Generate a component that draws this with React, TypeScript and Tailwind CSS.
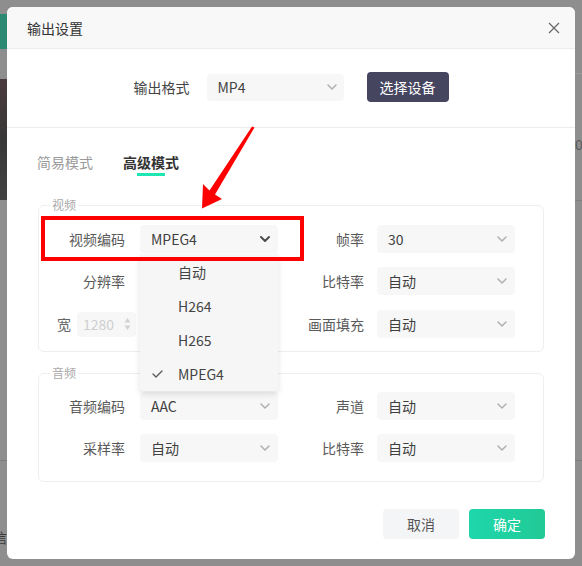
import clsx from 'clsx';

const Chevron = ({ dark }: { dark?: boolean }) => (
    <svg width="10" height="6" viewBox="0 0 10 6" fill="none" className={dark ? 'text-[#4a4a4a]' : 'text-[#b0b0b0]'}>
        <path
            d="M1 1l4 4 4-4"
            stroke="currentColor"
            strokeWidth={dark ? 1.9 : 1.5}
            strokeLinecap="round"
            strokeLinejoin="round"
        />
    </svg>
);

const Select = ({ value, open }: { value: string; open?: boolean }) => (
    <div className="flex h-[28px] w-[138px] items-center justify-between rounded-[4px] bg-[#f7f7f7] pl-[11px] pr-[8px] text-[14px] leading-[20px] text-[#3f3f3f]">
        <span>{value}</span>
        <Chevron dark={open} />
    </div>
);

const Label = ({ text, right }: { text: string; right?: boolean }) => (
    <span
        className={clsx(
            'text-right text-[14px] leading-[20px] text-[#5a5a5a]',
            right ? 'w-[85px]' : 'w-[86px]'
        )}
    >
        {text}
    </span>
);

const Field = ({ label, value, right, open }: { label: string; value: string; right?: boolean; open?: boolean }) => (
    <div className="flex w-[240px] items-center">
        <Label text={label} right={right} />
        <div className={right ? 'ml-[13px]' : 'ml-[15px]'}>
            <Select value={value} open={open} />
        </div>
    </div>
);

const CodecMenu = () => (
    <div className="absolute left-0 top-[29px] z-10 w-[138px] rounded-b-[4px] bg-[#f6f6f6] pt-[1px] shadow-[0_3px_6px_rgba(0,0,0,0.12)]">
        {['自动', 'H264', 'H265', 'MPEG4'].map(item => (
            <div key={item} className="relative flex h-[34px] items-center pl-[38px] text-[14px] leading-[20px] text-[#444]">
                {item === 'MPEG4' && (
                    <svg className="absolute left-[12px] top-[13px]" width="11" height="8" viewBox="0 0 11 8" fill="none">
                        <path d="M1 4l3 3 6-6" stroke="#555" strokeWidth="1.3" strokeLinecap="round" strokeLinejoin="round" />
                    </svg>
                )}
                {item}
            </div>
        ))}
    </div>
);

const App = () => {
    return (
        <div className="relative flex h-[566px] w-[582px] overflow-hidden bg-[#8e8e8e] font-['Noto_Sans_CJK_SC',sans-serif]">
            {/* app behind the overlay, left edge */}
            <div className="flex w-[7px] shrink-0 flex-col overflow-hidden">
                <div className="h-[14px]" />
                <div className="h-[35px] bg-[#2c8a73]" />
                <div className="h-[30px]" />
                <div className="h-[121px] bg-linear-to-b from-[#4a3b3d] via-[#383838] to-[#424242]" />
                <div className="h-[260px]" />
                <div className="h-px bg-[#7d7d7d]" />
                <div className="mt-[66px] -ml-[7px] text-[14px] leading-[20px] text-[#3a3a3a]">信</div>
            </div>

            <div className="mt-[7px] flex h-[552px] w-[568px] shrink-0 flex-col overflow-hidden rounded-[6px] bg-white">
                <div className="flex h-[42px] items-center justify-between border-b border-[#ececec] bg-[#f8f8f8] pl-[20px] pr-[15px]">
                    <span className="text-[14px] leading-[20px] text-[#333]">输出设置</span>
                    <svg width="12" height="12" viewBox="0 0 12 12" fill="none">
                        <path d="M1 1l10 10M11 1L1 11" stroke="#666" strokeWidth="1.2" />
                    </svg>
                </div>

                <div className="flex h-[79px] items-center justify-center border-b border-[#ececec] pb-[2px]">
                    <span className="text-[14px] leading-[20px] text-[#444]">输出格式</span>
                    <div className="ml-[17px] flex h-[27px] w-[137px] items-center justify-between rounded-[4px] bg-[#f7f7f7] pl-[11px] pr-[7px] text-[14px] leading-[20px] text-[#444]">
                        <span>MP4</span>
                        <Chevron />
                    </div>
                    <button className="ml-[23px] h-[30px] w-[82px] rounded-[4px] bg-[#45455f] text-[14px] leading-[20px] text-white">
                        选择设备
                    </button>
                </div>

                <div className="flex items-start gap-[30px] pl-[30px] pt-[24px]">
                    <span className="text-[14px] leading-[20px] text-[#9a9a9a]">简易模式</span>
                    <div className="flex flex-col items-center">
                        <span className="text-[14px] font-semibold leading-[20px] text-[#333]">高级模式</span>
                        <div className="mt-[1px] h-[3px] w-[28px] bg-[#1de6b3]" />
                    </div>
                </div>

                <fieldset className="mx-[31px] mt-[21px] min-w-0 rounded-[6px] border border-[#eeeeee] px-0 pb-[13px] pt-[12px]">
                    <legend className="ml-[11px] px-[2px] text-[12px] leading-[16px] text-[#aaa]">视频</legend>
                    <div className="flex items-center">
                        <div className="flex w-[240px] items-center">
                            <Label text="视频编码" />
                            <div className="relative ml-[15px]">
                                <Select value="MPEG4" open />
                                <CodecMenu />
                            </div>
                        </div>
                        <Field label="帧率" value="30" right />
                    </div>
                    <div className="mt-[14px] flex items-center">
                        <Field label="分辨率" value="自动" />
                        <Field label="比特率" value="自动" right />
                    </div>
                    <div className="mt-[15px] flex h-[28px] items-center">
                        <div className="flex w-[240px] items-center pl-[18px]">
                            <span className="text-[14px] leading-[20px] text-[#666]">宽</span>
                            <div className="ml-[6px] flex h-[25px] w-[59px] items-center justify-between rounded-[4px] bg-[#f7f7f7] pl-[6px] pr-[5px] text-[14px] leading-[20px] text-[#cfcfcf]">
                                <span>1280</span>
                                <svg width="7" height="14" viewBox="0 0 7 14" fill="#d2d2d2">
                                    <path d="M3.5 1L6.5 5.5H0.5Z" />
                                    <path d="M3.5 13L6.5 8.5H0.5Z" />
                                </svg>
                            </div>
                        </div>
                        <Field label="画面填充" value="自动" right />
                    </div>
                </fieldset>

                <fieldset className="mx-[31px] mt-[13px] min-w-0 rounded-[6px] border border-[#eeeeee] px-0 pb-[19px] pt-[11px]">
                    <legend className="ml-[11px] px-[2px] text-[12px] leading-[16px] text-[#aaa]">音频</legend>
                    <div className="flex items-center">
                        <Field label="音频编码" value="AAC" />
                        <Field label="声道" value="自动" right />
                    </div>
                    <div className="mt-[14px] flex items-center">
                        <Field label="采样率" value="自动" />
                        <Field label="比特率" value="自动" right />
                    </div>
                </fieldset>

                <div className="mt-[27px] flex justify-end gap-[10px] pr-[30px]">
                    <button className="h-[30px] w-[76px] rounded-[4px] bg-[#f4f5f7] text-[14px] leading-[20px] text-[#555]">
                        取消
                    </button>
                    <button className="h-[30px] w-[76px] rounded-[4px] bg-linear-to-r from-[#1dd7ab] to-[#21ca96] text-[14px] leading-[20px] text-white">
                        确定
                    </button>
                </div>
            </div>

            {/* app behind the overlay, right edge */}
            <div className="flex w-[7px] shrink-0 flex-col overflow-hidden">
                <div className="h-[73px]" />
                <div className="h-px bg-[#9a9a9a]" />
                <div className="mt-[60px] text-[14px] leading-[20px] text-[#5a5a5a]">0</div>
                <div className="mt-[46px] h-px bg-[#808080]" />
                <div className="mt-[259px] h-px bg-[#7d7d7d]" />
            </div>

            {/* annotation overlay */}
            <div className="pointer-events-none absolute left-[41px] top-[216px] z-20 h-[45px] w-[263px] border-4 border-[#ff0000]" />
            <svg className="pointer-events-none absolute left-0 top-0 z-20" width="582" height="566" viewBox="0 0 582 566">
                <polygon
                    fill="#ff0000"
                    points="252,126.5 254.5,127.5 215,194.5 222,199 202,208.5 203,184 209.5,190.5"
                />
            </svg>
        </div>
    );
};

export default App;
